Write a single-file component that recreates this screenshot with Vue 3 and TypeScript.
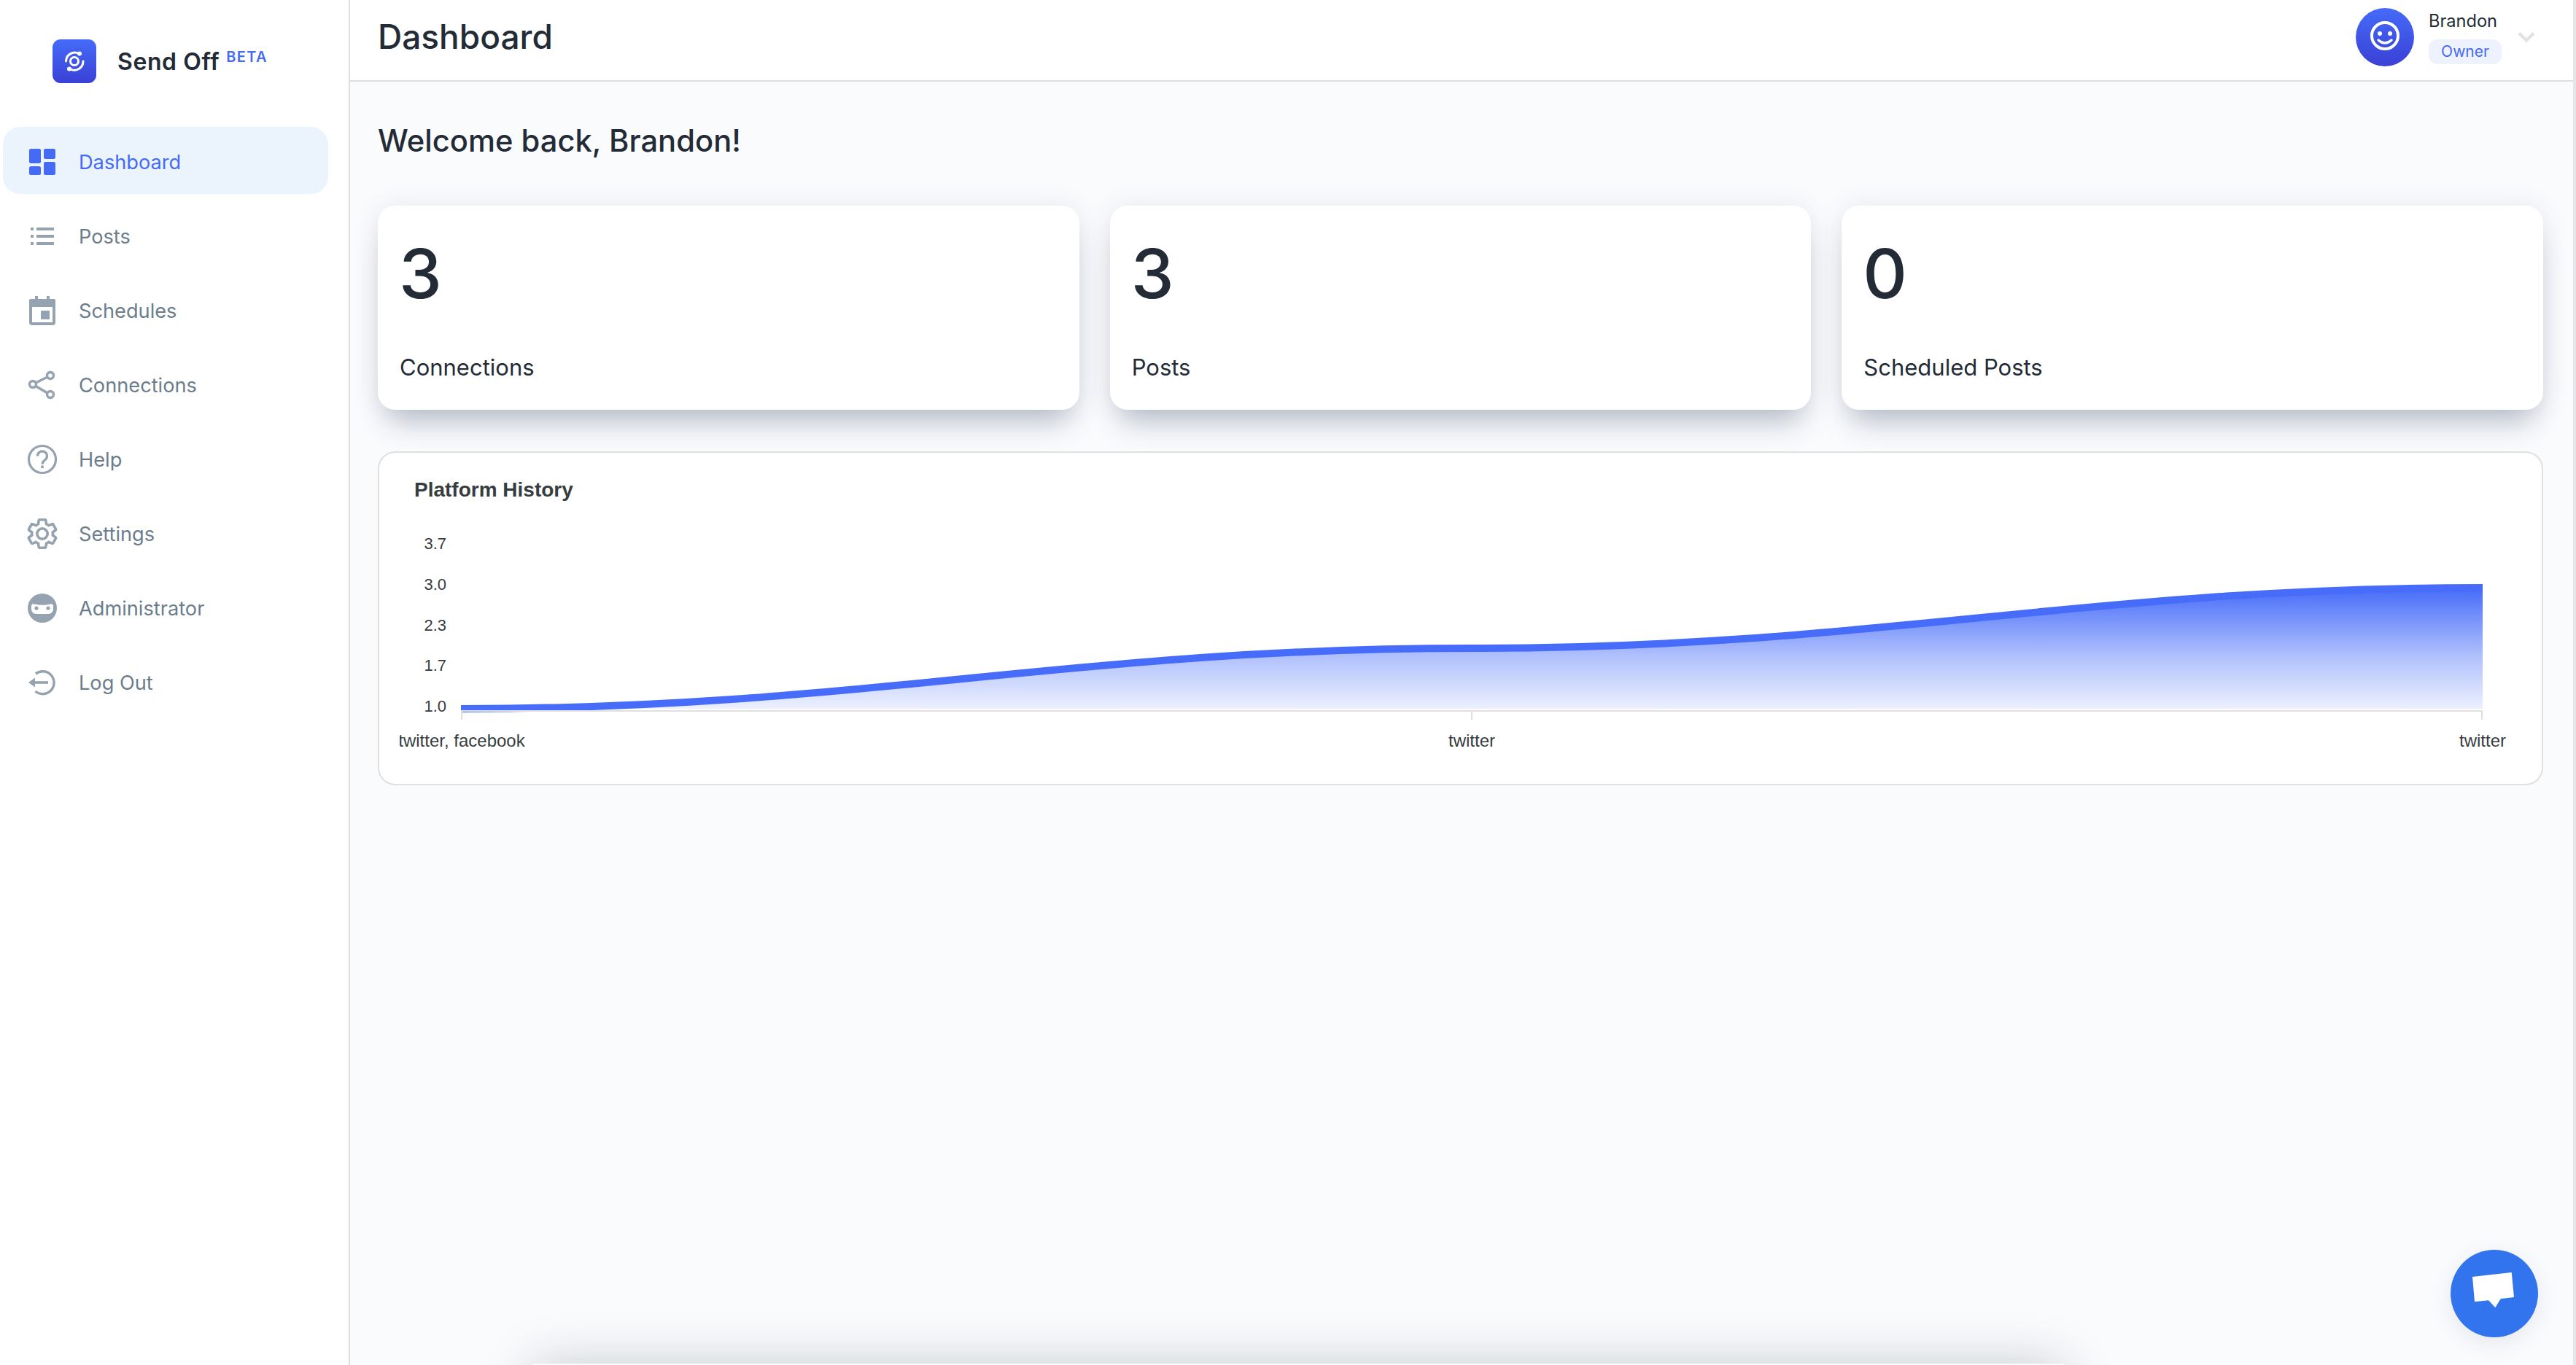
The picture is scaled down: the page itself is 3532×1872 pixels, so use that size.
<script setup lang="ts">
const navItems: { key: string; label: string }[] = [
  { key: 'dashboard', label: 'Dashboard' },
  { key: 'posts', label: 'Posts' },
  { key: 'schedules', label: 'Schedules' },
  { key: 'connections', label: 'Connections' },
  { key: 'help', label: 'Help' },
  { key: 'settings', label: 'Settings' },
  { key: 'admin', label: 'Administrator' },
  { key: 'logout', label: 'Log Out' },
]
const stats = [
  { value: 3, label: 'Connections' },
  { value: 3, label: 'Posts' },
  { value: 0, label: 'Scheduled Posts' },
]
const yLabels = [
  { text: '3.7', y: 753 },
  { text: '3.0', y: 809 },
  { text: '2.3', y: 865 },
  { text: '1.7', y: 920 },
  { text: '1.0', y: 976 },
]
const curve = 'M632 972 C1186 972 1464 889 2018 889 C2572 889 2850 806 3404 806'
</script>

<template>
  <div class="app">
    <aside class="sidebar">
      <div class="brand">
        <svg class="brand-mark" width="60" height="60" viewBox="0 0 60 60">
          <defs>
            <linearGradient id="brandGrad" x1="0" y1="0" x2="0" y2="1">
              <stop offset="0" stop-color="#456bf8" />
              <stop offset="1" stop-color="#3a40d6" />
            </linearGradient>
          </defs>
          <rect width="60" height="60" rx="11" fill="url(#brandGrad)" />
          <circle cx="30" cy="30" r="5.5" fill="none" stroke="#fff" stroke-width="3" />
          <path d="M36 19.5 A12 12 0 0 0 18.5 30" fill="none" stroke="#fff" stroke-width="3" stroke-linecap="round" />
          <path d="M24 40.5 A12 12 0 0 0 42 30" fill="none" stroke="#fff" stroke-width="3" stroke-linecap="round" />
          <circle cx="37" cy="19.5" r="3" fill="#fff" />
          <circle cx="23" cy="40.5" r="3" fill="#fff" />
        </svg>
        <span class="brand-name">Send Off</span>
        <span class="brand-beta">BETA</span>
      </div>
      <nav class="nav">
        <a v-for="item in navItems" :key="item.key" class="nav-item" :class="{ active: item.key === 'dashboard' }">
          <svg class="nav-icon" width="48" height="48" viewBox="0 0 48 48">
            <g v-if="item.key === 'dashboard'" fill="#456bf5">
              <rect x="6" y="6" width="16" height="20" rx="2.5" />
              <rect x="26" y="6" width="16" height="14" rx="2.5" />
              <rect x="6" y="30" width="16" height="12" rx="2.5" />
              <rect x="26" y="24" width="16" height="18" rx="2.5" />
            </g>
            <g v-else-if="item.key === 'posts'" fill="#95a2af">
              <rect x="8" y="12" width="4" height="4" />
              <rect x="8" y="22" width="4" height="4" />
              <rect x="8" y="32" width="4" height="4" />
              <rect x="16" y="12" width="24" height="4" />
              <rect x="16" y="22" width="24" height="4" />
              <rect x="16" y="32" width="24" height="4" />
            </g>
            <g v-else-if="item.key === 'schedules'" fill="#95a2af">
              <rect x="14" y="4" width="4" height="6" />
              <rect x="30" y="4" width="4" height="6" />
              <rect x="6" y="8" width="36" height="11" rx="2" />
              <rect x="8" y="10" width="32" height="32" rx="2" fill="none" stroke="#95a2af" stroke-width="4" />
              <rect x="22" y="24" width="12" height="12" />
            </g>
            <g v-else-if="item.key === 'connections'" fill="none" stroke="#95a2af" stroke-width="3.4">
              <circle cx="35" cy="11" r="4.5" />
              <circle cx="11" cy="23" r="4.5" />
              <circle cx="35" cy="37" r="4.5" />
              <path d="M15 21 L31 13 M15 25.5 L31 35" />
            </g>
            <g v-else-if="item.key === 'help'">
              <circle cx="24" cy="24" r="18.5" fill="none" stroke="#95a2af" stroke-width="3.2" />
              <path d="M17.5 19.5 a6.5 6.5 0 1 1 10.5 5 c-2.4 1.8 -4 3.2 -4 6" fill="none" stroke="#95a2af" stroke-width="3.2" />
              <rect x="22.2" y="32.5" width="3.6" height="3.6" fill="#95a2af" />
            </g>
            <g v-else-if="item.key === 'settings'" transform="scale(2)">
              <path fill="none" stroke="#95a2af" stroke-width="1.8" d="M19.14 12.94c.04-.3.06-.61.06-.94 0-.32-.02-.64-.07-.94l2.03-1.58c.18-.14.23-.41.12-.61l-1.92-3.32c-.12-.22-.37-.29-.59-.22l-2.39.96c-.5-.38-1.03-.7-1.62-.94l-.36-2.54c-.04-.24-.24-.41-.48-.41h-3.84c-.24 0-.43.17-.47.41l-.36 2.54c-.59.24-1.13.57-1.62.94l-2.39-.96c-.22-.08-.47 0-.59.22L2.74 8.87c-.12.21-.08.47.12.61l2.03 1.58c-.05.3-.09.63-.09.94s.02.64.07.94l-2.03 1.58c-.18.14-.23.41-.12.61l1.92 3.32c.12.22.37.29.59.22l2.39-.96c.5.38 1.03.7 1.62.94l.36 2.54c.05.24.24.41.48.41h3.84c.24 0 .44-.17.47-.41l.36-2.54c.59-.24 1.13-.56 1.62-.94l2.39.96c.22.08.47 0 .59-.22l1.92-3.32c.12-.22.07-.47-.12-.61l-2.01-1.58zM12 15.6c-1.98 0-3.6-1.62-3.6-3.6s1.62-3.6 3.6-3.6 3.6 1.62 3.6 3.6-1.62 3.6-3.6 3.6z" />
            </g>
            <g v-else-if="item.key === 'admin'">
              <circle cx="24" cy="24" r="20" fill="#95a2af" />
              <path fill="#fff" d="M9 21 c0-2 1.5-3.2 3.5-2.7 c7.5 2 15.5 2 23 0 c2-.5 3.5.7 3.5 2.7 v4 c0 4 -3 7 -7 7 h-16 c-4 0 -7-3 -7-7 z" />
              <circle cx="16" cy="24" r="2.6" fill="#95a2af" />
              <circle cx="32" cy="24" r="2.6" fill="#95a2af" />
            </g>
            <g v-else-if="item.key === 'logout'" fill="#95a2af">
              <path d="M15 12 A15.5 15.5 0 1 1 14.5 36" fill="none" stroke="#95a2af" stroke-width="3.5" />
              <rect x="12" y="22.2" width="20" height="3.6" />
              <path d="M5 24 L14 17.5 V30.5 Z" />
            </g>
          </svg>
          <span>{{ item.label }}</span>
        </a>
      </nav>
    </aside>

    <div class="main">
      <header class="topbar">
        <h1 class="page-title">Dashboard</h1>
        <div class="user">
          <svg class="avatar" width="80" height="80" viewBox="0 0 80 80">
            <defs>
              <linearGradient id="avatarGrad" x1="0" y1="0" x2="0" y2="1">
                <stop offset="0" stop-color="#456bf8" />
                <stop offset="1" stop-color="#3a40d6" />
              </linearGradient>
            </defs>
            <circle cx="40" cy="40" r="40" fill="url(#avatarGrad)" />
            <circle cx="40" cy="38" r="18" fill="none" stroke="#fff" stroke-width="4" />
            <circle cx="33" cy="35" r="3" fill="#fff" />
            <circle cx="47" cy="35" r="3" fill="#fff" />
            <path d="M31 44 Q40 52 49 44" fill="none" stroke="#fff" stroke-width="3.4" stroke-linecap="round" />
          </svg>
          <div class="user-text">
            <div class="user-name">Brandon</div>
            <div class="user-role">Owner</div>
          </div>
          <svg class="chevron" width="24" height="16" viewBox="0 0 24 16">
            <path d="M2 2.5 L12 12.5 L22 2.5" fill="none" stroke="#e2e2e2" stroke-width="4.4" />
          </svg>
        </div>
      </header>

      <main class="content">
        <h2 class="welcome">Welcome back, Brandon!</h2>
        <section class="stats">
          <div v-for="s in stats" :key="s.label" class="stat-card">
            <div class="stat-value">{{ s.value }}</div>
            <div class="stat-label">{{ s.label }}</div>
          </div>
        </section>
        <section class="chart-card">
          <div class="chart-title">Platform History</div>
          <svg class="chart" width="2965" height="352" viewBox="520 723 2965 352">
            <defs>
              <linearGradient id="areaGrad" x1="0" y1="0" x2="0" y2="1">
                <stop offset="0" stop-color="#466cf9" stop-opacity="1" />
                <stop offset="0.55" stop-color="#466cf9" stop-opacity="0.44" />
                <stop offset="1" stop-color="#466cf9" stop-opacity="0.1" />
              </linearGradient>
              <clipPath id="plotClip">
                <rect x="632" y="780" width="2772" height="200" />
              </clipPath>
              <clipPath id="labelClip">
                <rect x="548" y="990" width="2960" height="50" />
              </clipPath>
            </defs>
            <text v-for="l in yLabels" :key="l.text" class="axis-text" x="612" :y="l.y" text-anchor="end">{{ l.text }}</text>
            <path :d="curve + ' L3404 972 L632 972 Z'" fill="url(#areaGrad)" />
            <path :d="curve" fill="none" stroke="#466cf9" stroke-width="10" clip-path="url(#plotClip)" />
            <path d="M632 975 H3404 M633 975 V987 M2018 975 V987 M3403 975 V987" fill="none" stroke="#e0e0e0" stroke-width="2" />
            <g clip-path="url(#labelClip)">
              <text class="axis-text x-text" x="633" y="1024" text-anchor="middle">twitter, facebook</text>
              <text class="axis-text x-text" x="2018" y="1024" text-anchor="middle">twitter</text>
              <text class="axis-text x-text" x="3404" y="1024" text-anchor="middle">twitter</text>
            </g>
          </svg>
        </section>
      </main>
    </div>

    <div class="fold-shadow"></div>

    <button class="chat" type="button" aria-label="Chat">
      <svg width="120" height="120" viewBox="0 0 120 120">
        <path d="M30 37 L83.7 31 L87 65 L68.7 67.3 L61.3 79.3 L52 69.3 L33 71.3 Z" fill="#fff" />
      </svg>
    </button>
  </div>
</template>

<style>
html, body { margin: 0; padding: 0; background: #fafbfd; overflow: hidden; }
</style>

<style scoped>
.app {
  position: relative;
  display: flex;
  width: 3532px;
  height: 1872px;
  overflow: hidden;
  font-family: Inter, "Noto Sans", sans-serif;
  color: #232b36;
  background: #fafbfd;
}
.sidebar {
  box-sizing: border-box;
  flex: 0 0 480px;
  background: #fff;
  border-right: 2px solid #dfdfdf;
  z-index: 1;
}
.brand {
  display: flex;
  align-items: center;
  height: 60px;
  padding: 54px 0 0 72px;
}
.brand-mark { flex: none; }
.brand-name {
  margin-left: 29px;
  font-size: 32px;
  font-weight: 600;
  letter-spacing: 0.6px;
  color: #232b36;
}
.brand-beta {
  align-self: flex-start;
  margin: 12px 0 0 9px;
  font-size: 20px;
  font-weight: 600;
  letter-spacing: 1.3px;
  color: #456bf5;
}
.nav {
  display: flex;
  flex-direction: column;
  gap: 10px;
  margin: 60px 28px 0 4px;
}
.nav-item {
  box-sizing: border-box;
  display: flex;
  align-items: center;
  height: 92px;
  padding: 4px 0 0 30px;
  border-radius: 24px;
  font-size: 27.2px;
  color: #6b7d8c;
}
.nav-item.active {
  background: #ebf3fd;
  color: #456bf5;
}
.nav-icon { flex: none; margin-right: 26px; }
.main {
  box-sizing: border-box;
  flex: 1;
  min-width: 0;
  border-right: 4px solid #e6e6e6;
  display: flex;
  flex-direction: column;
}
.topbar {
  box-sizing: border-box;
  flex: 0 0 112px;
  display: flex;
  align-items: center;
  justify-content: space-between;
  padding: 0 52px 8px 38px;
  background: #fff;
  border-bottom: 2px solid #dfdfdf;
}
.page-title {
  margin: -2px 0 0;
  font-size: 46px;
  font-weight: 500;
  color: #232b36;
}
.user { display: flex; align-items: center; }
.avatar { flex: none; }
.user-text { margin-left: 20px; width: 100px; }
.user-name { font-size: 23.6px; line-height: 32px; color: #232b36; margin-top: -2px; }
.user-role {
  margin-top: 9px;
  height: 34px;
  line-height: 34px;
  text-align: center;
  border-radius: 12px;
  background: #edf2fd;
  color: #456bf5;
  font-size: 21px;
}
.chevron { flex: none; margin-left: 22px; }
.content {
  flex: 1;
  padding: 0 41px 0 38px;
}
.welcome {
  margin: 57px 0 0;
  height: 48px;
  line-height: 48px;
  font-size: 41.7px;
  font-weight: 500;
  color: #232b36;
}
.stats {
  display: grid;
  grid-template-columns: repeat(3, 1fr);
  gap: 42px;
  margin-top: 65px;
}
.stat-card {
  box-sizing: border-box;
  height: 280px;
  padding: 35px 30px 0;
  border-radius: 24px;
  background: #fff;
  box-shadow: 0 30px 40px -14px rgba(60, 70, 100, 0.32), 0 0 36px rgba(60, 70, 100, 0.1);
}
.stat-value {
  height: 116px;
  line-height: 116px;
  margin-left: -1px;
  font-size: 94px;
  font-weight: 500;
  color: #232b36;
}
.stat-label {
  margin-top: 51px;
  height: 40px;
  line-height: 40px;
  font-size: 31px;
  color: #232b36;
}
.chart-card {
  box-sizing: border-box;
  height: 458px;
  margin-top: 57px;
  border: 2px solid #e0e0e0;
  border-radius: 24px;
  background: #fff;
}
.chart-title {
  margin: 34px 0 0 48px;
  height: 34px;
  line-height: 34px;
  font-family: "Liberation Sans", Arial, sans-serif;
  font-size: 28px;
  font-weight: 700;
  color: #373d3f;
}
.chart { display: block; margin-top: 34px; }
.axis-text {
  font-family: "Liberation Sans", Arial, sans-serif;
  font-size: 22px;
  fill: #373d3f;
}
.x-text { font-size: 24px; }
.fold-shadow {
  position: absolute;
  left: 730px;
  width: 2100px;
  top: 1870px;
  height: 100px;
  box-shadow: 0 0 70px rgba(20, 30, 50, 0.22);
}
.chat {
  position: absolute;
  left: 3360px;
  top: 1714px;
  width: 120px;
  height: 120px;
  padding: 0;
  border: 0;
  border-radius: 50%;
  background: #3273ee;
  box-shadow: 0 8px 30px rgba(40, 60, 100, 0.1);
}
.chat svg { display: block; }
</style>
